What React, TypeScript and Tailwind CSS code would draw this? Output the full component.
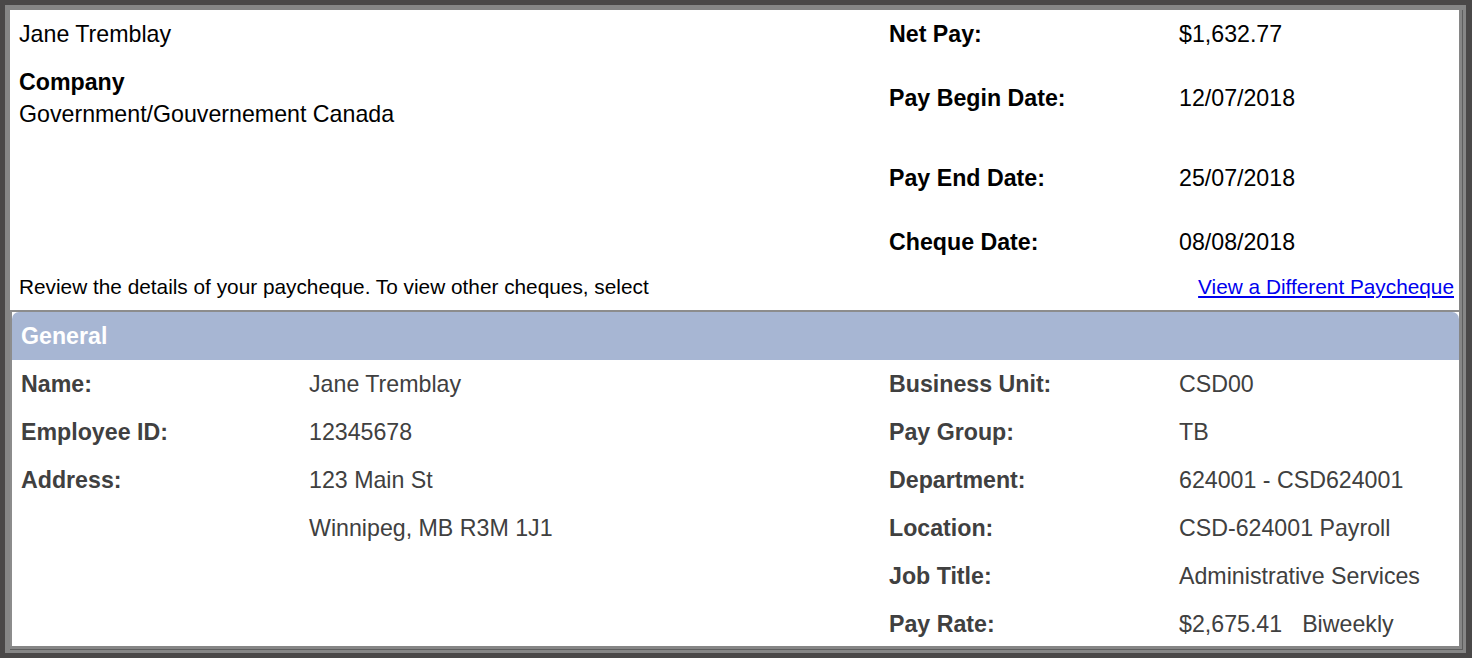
import React from "react";

const font = { fontFamily: '"Liberation Sans", Arial, Helvetica, sans-serif' };

function TopRow({ label, value, className }: { label: string; value: string; className?: string }) {
  return (
    <div className={"flex h-[32px] items-center " + (className ?? "")}>
      <div className="w-[290px] font-bold">{label}</div>
      <div>{value}</div>
    </div>
  );
}

function Row({ label, value, labelW }: { label: string; value: React.ReactNode; labelW: string }) {
  return (
    <div className="flex h-[48px] items-center">
      <div className={labelW + " font-bold"}>{label}</div>
      <div>{value}</div>
    </div>
  );
}

export default function App() {
  return (
    <div style={font} className="h-[658px] w-full bg-[#4a4848] pt-[5px] pl-[5px] pr-[6px] pb-[5px] flex">
      <div className="flex-1 flex bg-[#868686] pt-[5px] pl-[5px] pr-[3px] pb-[3px]">
        <div className="flex-1 flex border-r border-b border-[#5e5e5e]">
          <div className="flex-1 flex flex-col bg-white border-r-[3px] border-b-[3px] border-[#868686] overflow-hidden">
            {/* top section */}
            <div className="h-[300px] shrink-0 flex flex-col text-black">
              <div className="flex text-[23.2px] leading-[32px] pt-[8px]">
                <div className="flex-1 pl-[9px]">
                  <div>Jane Tremblay</div>
                  <div className="mt-[16px] font-bold">Company</div>
                  <div>Government/Gouvernement Canada</div>
                </div>
                <div className="w-[570px]">
                  <TopRow label="Net Pay:" value="$1,632.77" />
                  <TopRow label="Pay Begin Date:" value="12/07/2018" className="mt-[32px]" />
                  <TopRow label="Pay End Date:" value="25/07/2018" className="mt-[48px]" />
                  <TopRow label="Cheque Date:" value="08/08/2018" className="mt-[32px]" />
                </div>
              </div>
              <div className="mt-[13px] flex h-[32px] items-center justify-between pl-[9px] pr-[5px] text-[20.8px]">
                <span>Review the details of your paycheque. To view other cheques, select</span>
                <a href="#" className="text-[#0000ee] underline">View a Different Paycheque</a>
              </div>
            </div>
            {/* general section */}
            <div className="shrink-0 flex flex-col border-t-2 border-l-2 border-[#8c8c8c] text-[23.2px] text-[#404040]">
              <div className="h-[48px] shrink-0 flex items-center rounded-t-[7px] bg-[#a7b6d3] pl-[9px] font-bold text-white">
                General
              </div>
              <div className="flex">
                <div className="flex-1 pl-[9px]">
                  <Row labelW="w-[288px]" label="Name:" value="Jane Tremblay" />
                  <Row labelW="w-[288px]" label="Employee ID:" value="12345678" />
                  <Row labelW="w-[288px]" label="Address:" value="123 Main St" />
                  <Row labelW="w-[288px]" label="" value="Winnipeg, MB R3M 1J1" />
                </div>
                <div className="w-[570px]">
                  <Row labelW="w-[290px]" label="Business Unit:" value="CSD00" />
                  <Row labelW="w-[290px]" label="Pay Group:" value="TB" />
                  <Row labelW="w-[290px]" label="Department:" value="624001 - CSD624001" />
                  <Row labelW="w-[290px]" label="Location:" value="CSD-624001 Payroll" />
                  <Row labelW="w-[290px]" label="Job Title:" value="Administrative Services" />
                  <Row
                    labelW="w-[290px]"
                    label="Pay Rate:"
                    value={
                      <span>
                        $2,675.41<span className="ml-[20px]">Biweekly</span>
                      </span>
                    }
                  />
                </div>
              </div>
            </div>
          </div>
        </div>
      </div>
    </div>
  );
}
